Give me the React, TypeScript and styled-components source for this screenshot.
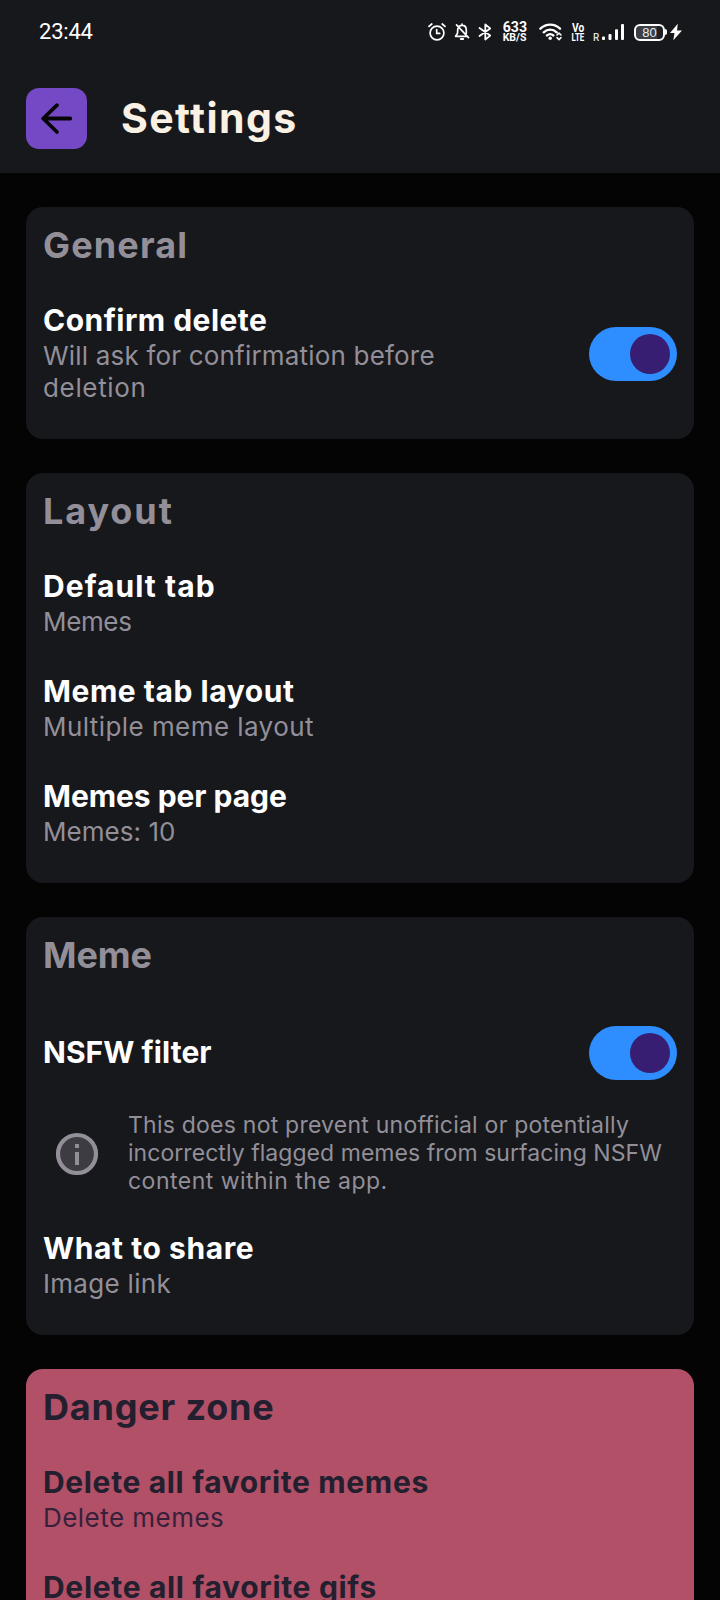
import React from 'react';
import styled, { createGlobalStyle } from 'styled-components';

const GlobalStyle = createGlobalStyle`
  * { box-sizing: border-box; }
  body {
    margin: 0;
    background: #040404;
    font-family: Inter, Roboto, sans-serif;
  }
`;

const Screen = styled.div`
  width: 720px;
  height: 1600px;
  overflow: hidden;
  background: #040404;
`;

const TopArea = styled.header`
  height: 173px;
  background: #17181c;
`;

const StatusBar = styled.div`
  display: flex;
  align-items: flex-start;
  justify-content: space-between;
  height: 88px;
  padding: 18px 38px 0 39px;
  color: #fff;
  font-family: Roboto, sans-serif;
`;

const Clock = styled.time`
  font-size: 22px;
  line-height: 28px;
  letter-spacing: -0.2px;
`;

const StatusIcons = styled.div`
  display: flex;
  align-items: center;
  height: 28px;
`;

const StatusSlot = styled.div<{ $width: number; $gap?: number }>`
  display: flex;
  flex: none;
  flex-direction: column;
  align-items: center;
  justify-content: center;
  width: ${(p) => p.$width}px;
  height: 28px;
  margin-left: ${(p) => p.$gap ?? 0}px;

  svg { display: block; }
`;

const TinyLabel = styled.span<{ $size: number; $line: number; $squeeze?: number }>`
  font-size: ${(p) => p.$size}px;
  line-height: ${(p) => p.$line}px;
  font-weight: 700;
  white-space: nowrap;
  transform: scaleX(${(p) => p.$squeeze ?? 1});
`;

const RoamingLabel = styled.span`
  align-self: flex-end;
  width: 9px;
  height: 14px;
  margin-left: 8px;
  font-size: 10px;
  line-height: 12px;
  font-weight: 500;
  color: #dedee0;
`;

const Battery = styled.div`
  display: flex;
  align-items: center;
  justify-content: center;
  width: 31px;
  height: 17px;
  margin-left: 10px;
  border: 2px solid #fff;
  border-radius: 6px;
  background: linear-gradient(90deg, #3d3e42 78%, #1f2023 78%);
  color: #ececee;
  font-family: "Liberation Sans", sans-serif;
  font-size: 13px;
  line-height: 13px;
`;

const BatteryCap = styled.span`
  width: 2px;
  height: 6px;
  border-radius: 0 2px 2px 0;
  background: #fff;
`;

const TitleBar = styled.div`
  display: flex;
  align-items: center;
  gap: 34px;
  height: 61px;
  padding-left: 26px;
`;

const BackButton = styled.button`
  display: flex;
  align-items: center;
  justify-content: center;
  width: 61px;
  height: 61px;
  padding: 0;
  border: 0;
  border-radius: 13px;
  background: #7549c5;
`;

const PageTitle = styled.h1`
  margin: -2px 0 0;
  color: #f9f1e4;
  font-size: 41px;
  line-height: 48px;
  font-weight: 700;
  letter-spacing: 1.4px;
`;

const Sections = styled.main`
  display: flex;
  flex-direction: column;
  gap: 34px;
  padding: 34px 26px;
`;

const Card = styled.section<{ $danger?: boolean }>`
  --title: ${(p) => (p.$danger ? '#231f2e' : '#ffffff')};
  --heading: ${(p) => (p.$danger ? '#231f2e' : '#938f99')};
  --detail: ${(p) => (p.$danger ? '#38203a' : '#938f99')};
  padding: 17px 17px 18px;
  border-radius: 17px;
  background: ${(p) => (p.$danger ? '#b15067' : '#17181c')};
`;

const Heading = styled.h2<{ $tracking: number }>`
  height: 60px;
  margin: 0;
  color: var(--heading);
  font-size: 36px;
  line-height: 43px;
  font-weight: 700;
  letter-spacing: ${(p) => p.$tracking}px;
`;

const Row = styled.div<{ $tall?: boolean }>`
  display: flex;
  align-items: center;
  justify-content: space-between;
  min-height: ${(p) => (p.$tall ? 117 : 105)}px;
  padding: 18px 0 17px;
`;

const RowText = styled.div`
  display: flex;
  flex-direction: column;
`;

const RowTitle = styled.div<{ $tracking: number }>`
  margin-bottom: 2px;
  color: var(--title);
  font-size: 30px;
  line-height: 36px;
  font-weight: 700;
  white-space: nowrap;
  letter-spacing: ${(p) => p.$tracking}px;
`;

const RowDetail = styled.div<{ $tracking: number }>`
  color: var(--detail);
  font-size: 26px;
  line-height: 32px;
  white-space: nowrap;
  letter-spacing: ${(p) => p.$tracking}px;
`;

const Toggle = styled.button<{ $lowered?: boolean }>`
  display: flex;
  align-items: center;
  justify-content: flex-end;
  flex: none;
  width: 88px;
  height: 54px;
  margin-top: ${(p) => (p.$lowered ? 2 : 0)}px;
  padding: 0 7px;
  border: 0;
  border-radius: 27px;
  background: #2f8eff;
`;

const Knob = styled.span`
  width: 40.5px;
  height: 40.5px;
  border-radius: 50%;
  background: #381e72;
`;

const Notice = styled.div`
  display: flex;
  align-items: center;
  gap: 29px;
  margin-bottom: 17px;
  padding-left: 12px;
`;

const NoticeText = styled.div`
  color: var(--detail);
  font-size: 23px;
  line-height: 28px;
`;

const NoticeLine = styled.div<{ $tracking: number }>`
  white-space: nowrap;
  letter-spacing: ${(p) => p.$tracking}px;
`;

const NoticeIcon = styled.svg`
  flex: none;
  margin-top: 2px;
`;

type Line = [text: string, tracking: number];

function Setting({ title, details, on }: { title: Line; details?: Line[]; on?: boolean }) {
  return (
    <Row $tall={!details}>
      <RowText>
        <RowTitle $tracking={title[1]}>{title[0]}</RowTitle>
        {details?.map(([text, tracking]) => (
          <RowDetail key={text} $tracking={tracking}>{text}</RowDetail>
        ))}
      </RowText>
      {on && (
        <Toggle role="switch" aria-checked="true" aria-label={title[0]} $lowered={!!details}>
          <Knob />
        </Toggle>
      )}
    </Row>
  );
}

const AlarmIcon = () => (
  <svg width="18" height="18" viewBox="0 0 18 18" fill="none" stroke="#fff" strokeWidth="1.7" strokeLinecap="round">
    <circle cx="9" cy="10" r="6.9" />
    <path d="M1 3.4 3.8 1M17 3.4 14.2 1M8.7 6.6v3.8h3" />
  </svg>
);

const BellOffIcon = () => (
  <svg width="16" height="18" viewBox="0 0 16 18" fill="none" stroke="#fff" strokeWidth="1.7" strokeLinecap="round" strokeLinejoin="round">
    <path d="M5.200 3.300C6 2.700 6.800 2.400 8 2.400c2.800 0 4.300 2 4.300 4.500v3.300M3.900 5.400c-.3 1.300-.2 3.400-.4 4.700-.2 1.200-1.400 2-1.900 3.300h10.600M8 2.200V1.200M2.500 1.900l12 12.700" />
    <path d="M6.800 16h2.400" strokeWidth="1.900" />
  </svg>
);

const BluetoothIcon = () => (
  <svg width="14" height="18" viewBox="0 0 14 18" fill="none" stroke="#fff" strokeWidth="1.800" strokeLinecap="round" strokeLinejoin="round">
    <path d="M1.500 5 12.200 12.600 7.300 16.500V1.500l4.900 3.900L1.500 13" />
  </svg>
);

const WifiIcon = () => (
  <svg width="24" height="18" viewBox="0 0 24 18" fill="none" stroke="#fff" strokeWidth="2.300" strokeLinecap="round">
    <path d="M1.400 5.700C7.200.3 15.300.3 21 5.700M4.700 9.300c3.900-3.500 9.200-3.500 13 .1" />
    <path d="M7.900 12.500c2-1.700 4.500-1.700 6.500 0" />
    <circle cx="11.200" cy="15.300" r="1.700" fill="#fff" stroke="none" />
    <path d="m18 12 2-2 2 2M18 14.600l2 2 2-2" strokeWidth="1.500" strokeLinejoin="round" />
  </svg>
);

const SignalIcon = () => (
  <svg width="22" height="18" viewBox="0 0 22 18" fill="#fff">
    <rect x="0" y="13.500" width="3" height="3.500" rx="1" />
    <rect x="6.500" y="11" width="3" height="6" rx="1" />
    <rect x="13" y="6.300" width="3" height="10.700" rx="1" />
    <rect x="19" y="1" width="3" height="16" rx="1" />
  </svg>
);

const BoltIcon = () => (
  <svg width="12" height="18" viewBox="0 0 12 18" fill="#fff">
    <path d="M7.800.8 0 10h4.500L3.300 17.200 12 7.400H7z" />
  </svg>
);

const ArrowIcon = () => (
  <svg width="33" height="33" viewBox="0 0 33 33" fill="none" stroke="#060608" strokeWidth="3.800" strokeLinecap="round" strokeLinejoin="round">
    <path d="M30.300 16.500H3.200M17 3.200 3.200 16.500 17 30" />
  </svg>
);

const InfoIcon = () => (
  <NoticeIcon width="44" height="44" viewBox="0 0 44 44">
    <circle cx="22" cy="22" r="19" fill="#3e3c43" stroke="#938f99" strokeWidth="4.200" />
    <path d="M20 12h4v4h-4zM20 20h4v13h-4z" fill="#938f99" />
  </NoticeIcon>
);

export default function App() {
  return (
    <Screen>
      <GlobalStyle />
      <TopArea>
        <StatusBar>
          <Clock>23:44</Clock>
          <StatusIcons>
            <StatusSlot $width={18}><AlarmIcon /></StatusSlot>
            <StatusSlot $width={16} $gap={8}><BellOffIcon /></StatusSlot>
            <StatusSlot $width={14} $gap={8}><BluetoothIcon /></StatusSlot>
            <StatusSlot $width={25} $gap={10}>
              <TinyLabel $size={15} $line={11} $squeeze={0.94}>633</TinyLabel>
              <TinyLabel $size={10.5} $line={9}>KB/S</TinyLabel>
            </StatusSlot>
            <StatusSlot $width={24} $gap={12}><WifiIcon /></StatusSlot>
            <StatusSlot $width={14} $gap={8}>
              <TinyLabel $size={12} $line={10} $squeeze={0.85}>Vo</TinyLabel>
              <TinyLabel $size={11} $line={9} $squeeze={0.72}>LTE</TinyLabel>
            </StatusSlot>
            <RoamingLabel>R</RoamingLabel>
            <StatusSlot $width={22}><SignalIcon /></StatusSlot>
            <Battery>80</Battery>
            <BatteryCap />
            <StatusSlot $width={12} $gap={3}><BoltIcon /></StatusSlot>
          </StatusIcons>
        </StatusBar>
        <TitleBar>
          <BackButton aria-label="Back"><ArrowIcon /></BackButton>
          <PageTitle>Settings</PageTitle>
        </TitleBar>
      </TopArea>

      <Sections>
        <Card>
          <Heading $tracking={1.15}>General</Heading>
          <Setting
            title={['Confirm delete', 0.46]}
            details={[['Will ask for confirmation before', 0.19], ['deletion', 0.65]]}
            on
          />
        </Card>

        <Card>
          <Heading $tracking={1.9}>Layout</Heading>
          <Setting title={['Default tab', 1.05]} details={[['Memes', -0.35]]} />
          <Setting title={['Meme tab layout', 0.54]} details={[['Multiple meme layout', 0.43]]} />
          <Setting title={['Memes per page', -0.05]} details={[['Memes: 10', 0.04]]} />
        </Card>

        <Card>
          <Heading $tracking={-0.15}>Meme</Heading>
          <Setting title={['NSFW filter', 0.05]} on />
          <Notice>
            <InfoIcon />
            <NoticeText>
              <NoticeLine $tracking={0.23}>This does not prevent unofficial or potentially</NoticeLine>
              <NoticeLine $tracking={0.05}>incorrectly flagged memes from surfacing NSFW</NoticeLine>
              <NoticeLine $tracking={0.48}>content within the app.</NoticeLine>
            </NoticeText>
          </Notice>
          <Setting title={['What to share', 0.57]} details={[['Image link', 0.3]]} />
        </Card>

        <Card $danger>
          <Heading $tracking={0.82}>Danger zone</Heading>
          <Setting title={['Delete all favorite memes', 0.65]} details={[['Delete memes', 0.46]]} />
          <Setting title={['Delete all favorite gifs', 0.68]} details={[['Delete gifs', 0.46]]} />
        </Card>
      </Sections>
    </Screen>
  );
}
